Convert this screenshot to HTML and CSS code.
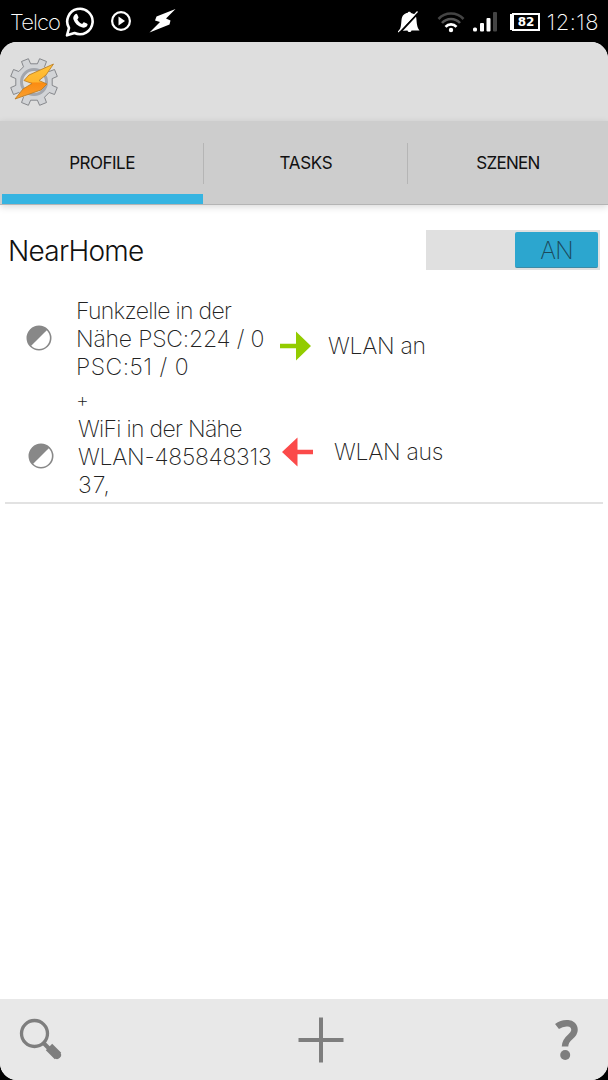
FILE: index.html
```html
<!DOCTYPE html>
<html lang="de">
<head>
  <meta charset="UTF-8">
  <title>Tasker</title>
  <link rel="stylesheet" href="styles.css">
</head>
<body>
  <div class="statusbar">
    <span class="carrier">Telco</span>
    <svg class="ic-whatsapp" width="30" height="32" viewBox="0 0 30 32">
      <path d="M4 22A12.7 12.7 0 1 1 9.5 27L2 29.3Z" fill="none" stroke="#fff" stroke-width="2.6" stroke-linejoin="round"/>
      <path d="M10 8.5c1-1 2-.8 2.400.2l1 2.400c.3.800-.2 1.400-1.100 2.300 1.200 2.200 2.600 3.500 4.900 4.500 1-1.300 1.500-1.900 2.300-1.500l2.400 1.200c1 .5.800 1 .4 2-.7 1.700-3 2.500-4.900 2-4.600-1.200-7.700-4.300-9-8.300-.5-1.800.2-3.500 1.600-4.800z" fill="#fff"/>
    </svg>
    <svg class="ic-play" width="22" height="22" viewBox="0 0 22 22">
      <circle cx="11" cy="11" r="8.900" fill="none" stroke="#fff" stroke-width="2.200"/>
      <path d="M8.500 6.500L15 11L8.500 15.500Z" fill="#fff"/>
    </svg>
    <svg class="ic-bolt" width="28" height="26" viewBox="0 0 28 26">
      <path d="M26.500 1L7.500 8.500L6 12.500L11 14L.5 24.500L20.500 16.500L21.500 12.500L17 10.500Z" fill="#fff"/>
    </svg>
    <svg class="ic-bell" width="22" height="22" viewBox="0 0 22 22">
      <path d="M1 20C3 17 3 14 3.500 9C4 4 7 2 9.500 2C10 .3 12.500 .3 13 2C15 2.300 17 3.500 18 5.500C19 9 18 15 21.500 19.500L13.500 19.500C13 21.500 10 21.500 9.500 19.500Z" fill="#fff"/>
      <path d="M1 22.500L21 1" stroke="#000" stroke-width="2"/>
      <path d="M0 21L19.500 .5" stroke="#fff" stroke-width="1.200"/>
    </svg>
    <svg class="ic-wifi" width="28" height="22" viewBox="0 0 28 22" fill="none" stroke-width="2.600">
      <path d="M1.500 8A17 17 0 0 1 26.500 8" stroke="#444"/>
      <path d="M5 12A12 12 0 0 1 23 12" stroke="#555"/>
      <path d="M8.500 15.800A7.500 7.500 0 0 1 19.500 15.800" stroke="#fff"/>
      <circle cx="14" cy="19" r="2.200" fill="#fff"/>
    </svg>
    <svg class="ic-signal" width="26" height="20" viewBox="0 0 26 20">
      <rect x="1" y="15.500" width="4" height="4" rx="1.500" fill="#fff"/>
      <rect x="8" y="11" width="4" height="8.500" rx="1" fill="#fff"/>
      <rect x="14.500" y="6" width="4" height="13.500" rx="1" fill="#fff"/>
      <rect x="21" y="0" width="4" height="19.500" rx="1" fill="#444"/>
    </svg>
    <span class="battery">82</span>
    <span class="clock">12:18</span>
  </div>

  <div class="app">
    <div class="header">
      <svg width="50" height="50" viewBox="-25 -25 50 50">
        <defs>
          <linearGradient id="flash" x1="0" y1="0" x2="0" y2="1">
            <stop offset="0" stop-color="#ffc33a"/>
            <stop offset=".5" stop-color="#ffb52e"/>
            <stop offset=".55" stop-color="#fb8c12"/>
            <stop offset="1" stop-color="#f9a030"/>
          </linearGradient>
        </defs>
        <path d="M18.200 3.400L23.300 5.600L20.500 12.500L15.200 10.500L10.500 15.200L12.500 20.500L5.600 23.300L3.400 18.200L-3.400 18.200L-5.600 23.300L-12.500 20.500L-10.500 15.200L-15.200 10.500L-20.500 12.500L-23.300 5.600L-18.200 3.400L-18.200 -3.400L-23.300 -5.600L-20.500 -12.500L-15.200 -10.500L-10.500 -15.200L-12.500 -20.500L-5.600 -23.300L-3.400 -18.200L3.400 -18.200L5.600 -23.300L12.500 -20.500L10.500 -15.200L15.200 -10.500L20.500 -12.500L23.300 -5.600L18.200 -3.400Z" fill="#d2d4d7" stroke="#85878b" stroke-width="1" stroke-linejoin="round"/>
        <circle r="12.500" fill="#dedede" stroke="#a3a6ad" stroke-width="3"/>
        <path d="M19.500 -18L-5 -7L-10 -1.500L-2 1.500L-11 7L-19 17L7 8L13 2L5 -1.500L12 -7Z" fill="url(#flash)" stroke="#b7791f" stroke-width=".8" stroke-linejoin="round"/>
      </svg>
    </div>

    <div class="tabs">
      <div class="tab active"><span class="t-profile">PROFILE</span></div>
      <div class="tab"><span class="t-tasks">TASKS</span></div>
      <div class="tab"><span class="t-szenen">SZENEN</span></div>
    </div>

    <div class="content">
      <div class="profile-head">
        <span class="profile-name">NearHome</span>
        <div class="switch"><div class="thumb">AN</div></div>
      </div>

      <div class="profile-body">
        <div class="contexts">
          <div class="context">
            <svg class="state" width="26" height="26" viewBox="0 0 26 26">
              <circle cx="13" cy="13" r="11.700" fill="#fff" stroke="#888" stroke-width="1.600"/>
              <path d="M4.700 21.300A11.700 11.700 0 0 1 21.300 4.700Z" fill="#888"/>
            </svg>
            <div class="lines">
              <div class="l1">Funkzelle in der</div>
              <div class="l2">Nähe PSC:224 / 0</div>
              <div class="l3">PSC:51 / 0</div>
            </div>
          </div>
          <div class="plus">+</div>
          <div class="context second">
            <svg class="state" width="26" height="26" viewBox="0 0 26 26">
              <circle cx="13" cy="13" r="11.700" fill="#fff" stroke="#888" stroke-width="1.600"/>
              <path d="M4.700 21.300A11.700 11.700 0 0 1 21.300 4.700Z" fill="#888"/>
            </svg>
            <div class="lines">
              <div class="l4">WiFi in der Nähe</div>
              <div class="l5">WLAN-485848313</div>
              <div class="l6">37,</div>
            </div>
          </div>
        </div>
        <div class="tasks">
          <div class="task">
            <svg width="32" height="30" viewBox="0 0 32 30">
              <path d="M0 12.800H16V.5L31 15L16 29.500V17.200H0Z" fill="#93cc00"/>
            </svg>
            <span class="task-on">WLAN an</span>
          </div>
          <div class="task exit">
            <svg width="32" height="30" viewBox="0 0 32 30">
              <path d="M31 12.800H15.500V.5L0 15L15.500 29.500V17.200H31Z" fill="#fb4a4a"/>
            </svg>
            <span class="task-off">WLAN aus</span>
          </div>
        </div>
      </div>
    </div>

    <div class="footer">
      <svg width="44" height="44" viewBox="0 0 44 44">
        <circle cx="16.500" cy="15.500" r="13" fill="none" stroke="#7e7e7e" stroke-width="3.300"/>
        <path d="M25.500 25L31 30.500" stroke="#7e7e7e" stroke-width="4"/>
        <path d="M31 29L40 38" stroke="#7e7e7e" stroke-width="9"/>
        <path d="M38 36L39 37" stroke="#7e7e7e" stroke-width="8" stroke-linecap="round"/>
      </svg>
      <svg class="add" width="46" height="46" viewBox="0 0 46 46">
        <path d="M.5 23H45.500M23 .5V45.500" stroke="#7e7e7e" stroke-width="4"/>
      </svg>
      <svg width="26" height="42" viewBox="0 0 26 42">
        <path d="M3 7.500C9 3 20.500 2.200 20.500 11C20.500 18 11 18 11 27.500" fill="none" stroke="#7e7e7e" stroke-width="6.500"/>
        <circle cx="11.200" cy="36" r="5" fill="#7e7e7e"/>
      </svg>
    </div>
  </div>
</body>
</html>
```

FILE: styles.css
```css
* {
  box-sizing: border-box;
}

body {
  margin: 0;
  width: 608px;
  height: 1080px;
  background: #000;
  font-family: Inter, "Liberation Sans", sans-serif;
  font-weight: 250;
  color: #222;
  overflow: hidden;
}

svg {
  display: block;
  flex: none;
}

.statusbar {
  height: 42px;
  display: flex;
  align-items: center;
  padding: 2px 9px 0 10px;
  color: #fff;
}

.carrier {
  width: 55px;
  font-size: 22px;
  letter-spacing: -0.9px;
}

.ic-play {
  margin: -2px 0 0 15px;
}

.ic-bolt {
  margin: -2px 0 0 17px;
}

.ic-bell {
  margin-left: 221px;
}

.ic-wifi {
  margin-left: 17px;
}

.ic-signal {
  margin-left: 7px;
}

.battery {
  width: 28px;
  height: 18px;
  margin: -1px 0 0 14px;
  border: 2px solid #fff;
  box-shadow: -3px 0 0 -1px #fff;
  font: bold 12px/14px "DejaVu Sans", sans-serif;
  text-align: center;
}

.clock {
  margin-left: auto;
  font-size: 22px;
  letter-spacing: 0.5px;
}

.app {
  height: 1038px;
  display: flex;
  flex-direction: column;
  border-radius: 17px;
  overflow: hidden;
  background: #fff;
}

.header {
  height: 79px;
  padding: 15px 9px;
  background: #dedede;
}

.tabs {
  height: 84px;
  display: flex;
  background: #cdcdcd;
  border-bottom: 1px solid #b4b4b4;
  box-shadow: 0 2px 7px rgba(0, 0, 0, 0.15);
}

.tab {
  width: 204px;
  height: 84px;
  display: flex;
  align-items: center;
  justify-content: center;
  font-size: 17px;
  font-weight: 400;
  color: #111;
  background: linear-gradient(#b5b5b5, #b5b5b5) right 22px / 1px 41px no-repeat;
}

.tab:last-child {
  width: 200px;
  background: none;
}

.tab.active {
  background: linear-gradient(#b5b5b5, #b5b5b5) right 22px / 1px 41px no-repeat,
    linear-gradient(#36b4e1, #36b4e1) 2px 73px / 201px 10px no-repeat;
}

.t-profile {
  letter-spacing: -0.5px;
}

.t-tasks {
  letter-spacing: -0.3px;
}

.t-szenen {
  letter-spacing: -0.7px;
}

.content {
  flex: 1;
  padding-top: 25px;
}

.profile-head {
  height: 40px;
  display: flex;
  align-items: center;
  justify-content: space-between;
  padding: 0 8px;
}

.profile-name {
  padding-top: 2px;
  font-size: 28px;
  font-weight: 300;
  letter-spacing: -0.75px;
  color: #111;
}

.switch {
  width: 174px;
  height: 40px;
  padding: 2px 2px 2px 89px;
  background: #e0e0e0;
}

.thumb {
  height: 36px;
  border-radius: 2px;
  border-bottom: 1px solid #3d8ba6;
  background: #2ca6cf;
  color: #1b4a5c;
  font-size: 24px;
  line-height: 38px;
  letter-spacing: -0.8px;
  text-align: center;
}

.profile-body {
  height: 234px;
  display: flex;
  margin: 0 5px;
  padding: 27px 0 0 21px;
  border-bottom: 2px solid #e2e2e2;
  font-size: 23px;
  line-height: 28px;
  white-space: nowrap;
}

.contexts {
  width: 254px;
}

.context {
  display: flex;
  align-items: center;
  gap: 24px;
}

.state {
  margin-top: -2px;
}

.second {
  padding-left: 2px;
}

.l1 {
  letter-spacing: -0.7px;
}

.l2 {
  letter-spacing: -0.2px;
}

.l3 {
  letter-spacing: 0.5px;
}

.l4 {
  letter-spacing: -0.7px;
}

.l5 {
  letter-spacing: -0.25px;
}

.l6 {
  letter-spacing: 1px;
}

.plus {
  height: 34px;
  padding-left: 50px;
  font-size: 20px;
  line-height: 38px;
}

.task {
  display: flex;
  align-items: center;
  gap: 16px;
  padding-top: 34px;
}

.task-on,
.task-off {
  letter-spacing: -0.3px;
}

.exit {
  padding: 76px 0 0 2px;
  gap: 20px;
}

.footer {
  height: 81px;
  display: flex;
  align-items: center;
  justify-content: space-between;
  padding: 0 28px 0 18px;
  background: #e8e8e8;
}

.add {
  margin-left: 26px;
}
```
